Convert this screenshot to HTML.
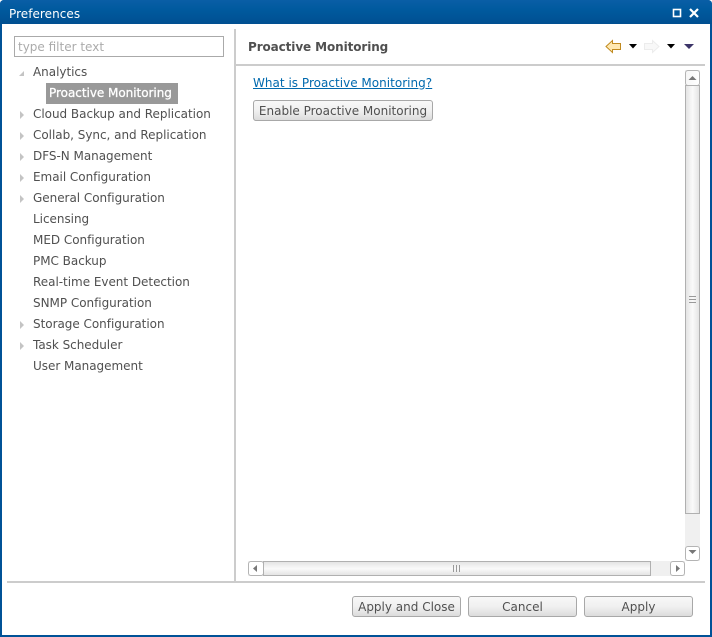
<!DOCTYPE html>
<html><head><meta charset="utf-8"><title>Preferences</title>
<style>
html,body{margin:0;padding:0;width:712px;height:637px;overflow:hidden;background:#fff}
body{position:relative;font-family:"DejaVu Sans","Liberation Sans",sans-serif;font-size:12px;color:#505050}
div,span,a{position:absolute;white-space:nowrap;box-sizing:border-box}
.t{height:21px;line-height:21px;left:33px;letter-spacing:-.03px}
.btn{height:21px;border:1px solid #a8a8a8;border-radius:3px;background:linear-gradient(#f8f8f8,#f0f0f0 50%,#dcdcdc);text-align:center;line-height:21px;color:#505050;letter-spacing:0}
.sb{background:#fff;border:1px solid #b4b4b4;border-radius:3px}
.g{background:#ccc}
</style></head><body>
<div style="left:0;top:0;width:712px;height:637px;background:#005297;border-radius:4px 4px 0 0"></div>
<div style="left:0;top:0;width:712px;height:24px;background:linear-gradient(#0a5ea6,#005a9e 40%,#004f91);border-radius:4px 4px 0 0"></div>
<div style="left:2px;top:24px;width:708px;height:611px;background:#fff"></div>
<div style="left:9px;top:4px;height:20px;line-height:20px;color:#fff;letter-spacing:.05px">Preferences</div>
<svg style="position:absolute;left:672px;top:7px" width="30" height="12" viewBox="0 0 30 12"><rect x="1.5" y="2.5" width="7" height="7" fill="none" stroke="#fff" stroke-width="1.6"/><path d="M18 2 L26 10 M26 2 L18 10" stroke="#fff" stroke-width="2.2" fill="none"/></svg>

<div style="left:14px;top:36px;width:210px;height:21px;border:1px solid #aaa;background:#fff"></div>
<div style="left:18px;top:38px;height:19px;line-height:19px;color:#ababab;letter-spacing:0">type filter text</div>

<svg style="position:absolute;left:18px;top:67px" width="10" height="300" viewBox="0 0 10 300">
<g fill="#c4c4c4"><path d="M1 9 L6 9 L6 4 Z"/>
<path d="M2 44 L2 52 L6 48 Z"/><path d="M2 65 L2 73 L6 69 Z"/><path d="M2 86 L2 94 L6 90 Z"/><path d="M2 107 L2 115 L6 111 Z"/><path d="M2 128 L2 136 L6 132 Z"/><path d="M2 254 L2 262 L6 258 Z"/><path d="M2 275 L2 283 L6 279 Z"/></g></svg>

<div class="t" style="top:62px">Analytics</div>
<div style="left:46px;top:83px;width:132px;height:21px;background:#999"></div>
<div class="t" style="left:49px;top:83px;color:#fff;-webkit-text-stroke:.3px #fff">Proactive Monitoring</div>
<div class="t" style="top:104px">Cloud Backup and Replication</div>
<div class="t" style="top:125px">Collab, Sync, and Replication</div>
<div class="t" style="top:146px">DFS-N Management</div>
<div class="t" style="top:167px">Email Configuration</div>
<div class="t" style="top:188px">General Configuration</div>
<div class="t" style="top:209px">Licensing</div>
<div class="t" style="top:230px">MED Configuration</div>
<div class="t" style="top:251px">PMC Backup</div>
<div class="t" style="top:272px">Real-time Event Detection</div>
<div class="t" style="top:293px">SNMP Configuration</div>
<div class="t" style="top:314px">Storage Configuration</div>
<div class="t" style="top:335px">Task Scheduler</div>
<div class="t" style="top:356px">User Management</div>

<div class="g" style="left:234px;top:29px;width:2px;height:552px"></div>
<div class="g" style="left:236px;top:64px;width:469px;height:2px"></div>
<div class="g" style="left:7px;top:581px;width:698px;height:2px"></div>

<div style="left:248px;top:37px;height:21px;line-height:21px;font-weight:bold;color:#505050;letter-spacing:-.1px">Proactive Monitoring</div>

<svg style="position:absolute;left:605px;top:39px" width="92" height="15" viewBox="0 0 92 15">
<path d="M1 7.5 L7.5 1.5 L7.5 4.5 L15.5 4.500 L15.5 10.5 L7.5 10.5 L7.5 13.5 Z" fill="#ffe8b0" stroke="#c08a20" stroke-width="1"/>
<path d="M24 5 L32 5 L28 9.5 Z" fill="#000"/>
<path d="M54 7.5 L47.5 1.5 L47.5 4.5 L39.5 4.5 L39.5 10.5 L47.5 10.5 L47.5 13.5 Z" fill="#f8f8f8" stroke="#ececec" stroke-width="1"/>
<path d="M62 5 L70 5 L66 9.5 Z" fill="#000"/>
<path d="M79 5 L89 5 L84 10 Z" fill="#3c3468"/>
</svg>

<a style="left:253px;top:73px;height:21px;line-height:21px;color:#0069ae;text-decoration:underline;letter-spacing:.02px">What is Proactive Monitoring?</a>
<div class="btn" style="left:253px;top:100px;width:180px">Enable Proactive Monitoring</div>

<!-- vertical scrollbar -->
<div style="left:685px;top:70px;width:15px;height:491px;background:#f0f0f0"></div>
<div class="sb" style="left:685px;top:70px;width:15px;height:16px;background:linear-gradient(90deg,#f6f6f6,#fff)"></div>
<div style="left:685px;top:85px;width:15px;height:429px;border:1px solid #b0b0b0;background:linear-gradient(90deg,#e4e4e4,#fafafa 50%,#e4e4e4)"></div>
<div class="sb" style="left:685px;top:546px;width:15px;height:15px"></div>
<svg style="position:absolute;left:685px;top:70px" width="15" height="491" viewBox="0 0 15 491">
<path d="M3.5 10 L11.5 10 L7.5 6 Z" fill="#777"/>
<path d="M3.5 480 L11.500 480 L7.5 484 Z" fill="#777"/>
<path d="M4 226.500 H11 M4 229.500 H11 M4 232.500 H11" stroke="#999" stroke-width="1"/>
</svg>

<!-- horizontal scrollbar -->
<div style="left:248px;top:561px;width:437px;height:15px;background:#f0f0f0"></div>
<div class="sb" style="left:248px;top:561px;width:16px;height:15px"></div>
<div style="left:263px;top:561px;width:388px;height:15px;border:1px solid #b0b0b0;background:linear-gradient(#e4e4e4,#fafafa 50%,#e4e4e4)"></div>
<div class="sb" style="left:670px;top:561px;width:15px;height:15px"></div>
<svg style="position:absolute;left:248px;top:561px" width="437" height="15" viewBox="0 0 437 15">
<path d="M9 4 L9 11 L5 7.500 Z" fill="#777"/>
<path d="M428 4 L428 11 L432 7.500 Z" fill="#777"/>
<path d="M205.500 4 V11 M208.500 4 V11 M211.500 4 V11" stroke="#999" stroke-width="1"/>
</svg>

<div class="btn" style="left:352px;top:596px;width:109px">Apply and Close</div>
<div class="btn" style="left:468px;top:596px;width:109px">Cancel</div>
<div class="btn" style="left:584px;top:596px;width:109px">Apply</div>
</body></html>
